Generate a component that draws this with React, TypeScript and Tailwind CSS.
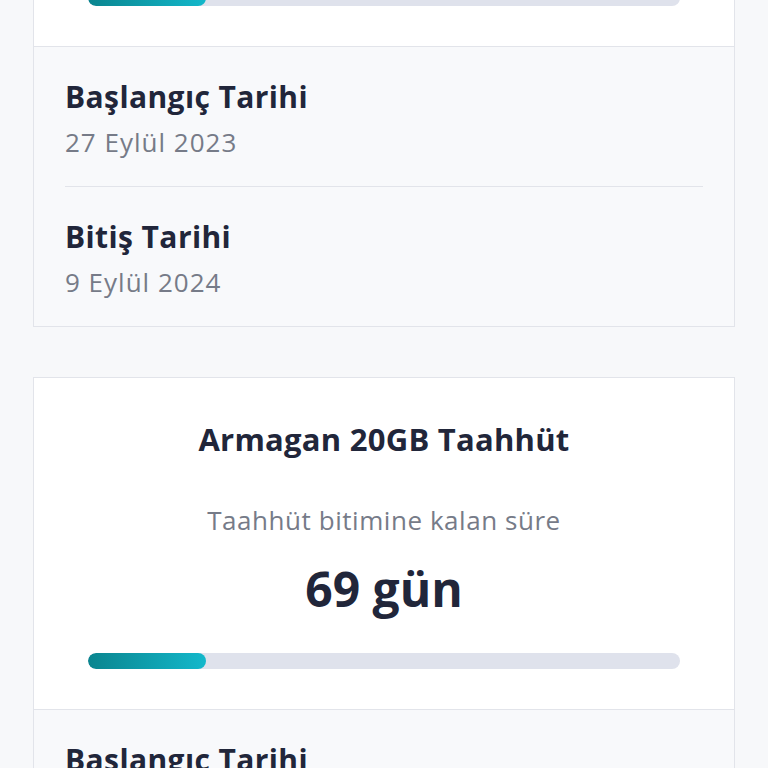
const font = { fontFamily: "'Open Sans', 'Noto Sans', sans-serif" };

type Commitment = {
  name: string;
  daysLeft: number;
  progress: number;
  start: string;
  end: string;
};

const items: Commitment[] = [
  { name: "Armagan 20GB Taahhüt", daysLeft: 69, progress: 20, start: "27 Eylül 2023", end: "9 Eylül 2024" },
  { name: "Armagan 20GB Taahhüt", daysLeft: 69, progress: 20, start: "27 Eylül 2023", end: "9 Eylül 2024" },
];

function DateRow({ label, value, last }: { label: string; value: string; last?: boolean }) {
  return (
    <div className={last ? "pt-[32px] pb-[28px]" : "pt-[32px] pb-[28px] border-b border-[#e2e4ea]"}>
      <p className="text-[30px] leading-[36px] font-bold tracking-[0.4px] text-[#21263a]">{label}</p>
      <p className="mt-[11px] text-[26px] leading-[32px] tracking-[1px] text-[#767b88]">{value}</p>
    </div>
  );
}

function CommitmentCard({ item }: { item: Commitment }) {
  return (
    <div className="bg-white border border-[#e2e4ea]">
      <div className="pt-[41px] pb-[40px] px-[54px] flex flex-col items-center text-center">
        <h2 className="text-[31px] leading-[40px] font-bold tracking-[0.25px] text-[#21263a]">{item.name}</h2>
        <p className="mt-[45px] text-[26px] leading-[32px] tracking-[0.55px] text-[#767b88]">
          Taahhüt bitimine kalan süre
        </p>
        <p className="mt-[23px] text-[48px] leading-[60px] font-bold text-[#21263a]">{item.daysLeft} gün</p>
        <div className="mt-[34px] w-full h-[16px] rounded-full bg-[#dfe2ec] overflow-hidden">
          <div
            className="h-full rounded-full bg-gradient-to-r from-[#0a858f] to-[#13b8cb]"
            style={{ width: `${item.progress}%` }}
          />
        </div>
      </div>
      <div className="border-t border-[#e2e4ea] bg-[#f8f9fb] px-[31px]">
        <DateRow label="Başlangıç Tarihi" value={item.start} />
        <DateRow label="Bitiş Tarihi" value={item.end} last />
      </div>
    </div>
  );
}

export default function App() {
  return (
    <div className="w-[768px] h-[768px] overflow-hidden bg-[#f7f8fa]" style={font}>
      <div className="-mt-[286px] px-[33px] flex flex-col gap-[50px]">
        {items.map((item, i) => (
          <CommitmentCard key={i} item={item} />
        ))}
      </div>
    </div>
  );
}
